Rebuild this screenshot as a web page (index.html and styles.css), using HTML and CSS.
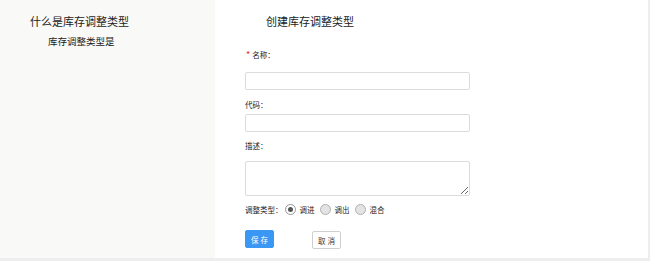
FILE: index.html
```html
<!DOCTYPE html>
<html lang="zh">
<head>
<meta charset="utf-8">
<title>创建库存调整类型</title>
<link rel="stylesheet" href="styles.css">
</head>
<body>
<div class="page">
  <aside class="sidebar">
    <div class="side-title">什么是库存调整类型</div>
    <div class="side-sub">库存调整类型是</div>
  </aside>
  <main class="main">
    <div class="main-title">创建库存调整类型</div>
    <div class="label label-name"><span class="req">*</span>名称：</div>
    <input class="input input-name" type="text">
    <div class="label label-code">代码：</div>
    <input class="input input-code" type="text">
    <div class="label label-desc">描述：</div>
    <textarea class="textarea"></textarea>
    <div class="radio-row">
      <span class="radio-label">调整类型：</span>
      <span class="radio checked"></span><span class="opt">调进</span>
      <span class="radio"></span><span class="opt">调出</span>
      <span class="radio"></span><span class="opt">混合</span>
    </div>
    <div class="buttons">
      <button class="btn btn-save">保存</button>
      <button class="btn btn-cancel">取消</button>
    </div>
  </main>
</div>
</body>
</html>
```
FILE: styles.css
```css
* { box-sizing: border-box; }
html, body { margin: 0; padding: 0; }
body {
  width: 650px;
  height: 261px;
  background: #eeeeee;
  font-family: "Noto Sans CJK SC", "Noto Sans", sans-serif;
  color: #333;
  overflow: hidden;
}
.page {
  display: flex;
  width: 648px;
  height: 258px;
}
.sidebar {
  width: 215px;
  background: #f9f9f7;
  padding-left: 30px;
}
.side-title {
  font-size: 11px;
  line-height: 14px;
  margin-top: 14px;
  color: #222;
}
.side-sub {
  font-size: 9.5px;
  line-height: 12px;
  margin-top: 7px;
  padding-left: 18px;
  color: #222;
}
.main {
  flex: 1;
  background: #fff;
  padding-left: 30px;
  display: flex;
  flex-direction: column;
  align-items: flex-start;
}
.main-title {
  font-size: 11px;
  line-height: 14px;
  margin-top: 14px;
  padding-left: 21px;
  color: #222;
}
.label {
  font-size: 7.5px;
  line-height: 10px;
  color: #222;
}
.req { color: #e22; margin-right: 2px; margin-left: 1px; font-size: 9px; }
.label-name { margin-top: 22px; }
.label-code { margin-top: 10px; }
.label-desc { margin-top: 9px; }
.input {
  width: 225px;
  height: 18px;
  border: 1px solid #dcdcdc;
  border-radius: 2px;
  padding: 0 4px;
  outline: none;
}
.input-name { margin-top: 12px; }
.input-code { margin-top: 4px; }
.textarea {
  margin-top: 10px;
  width: 225px;
  height: 35px;
  border: 1px solid #dcdcdc;
  border-radius: 2px;
  display: block;
}
.radio-row {
  display: flex;
  align-items: center;
  margin-top: 7px;
  height: 12px;
  font-size: 7.5px;
  color: #222;
}
.radio-label { margin-right: 2px; }
.radio {
  width: 11px;
  height: 11px;
  border-radius: 50%;
  border: 1px solid #b0b0b0;
  background: #e3e3e3;
  position: relative;
  margin-right: 4px;
}
.radio.checked { background: #fff; border-color: #999; }
.radio.checked::after {
  content: "";
  position: absolute;
  left: 2px; top: 2px;
  width: 5px; height: 5px;
  border-radius: 50%;
  background: #555;
}
.opt { margin-right: 5px; }
.buttons {
  display: flex;
  align-items: flex-start;
  margin-top: 15px;
}
.btn {
  font-family: inherit;
  font-size: 7.5px;
  letter-spacing: 2px;
  height: 18px;
  width: 29px;
  padding: 0 0 0 2px;
  border-radius: 2px;
  cursor: pointer;
}
.btn-save {
  background: #3a97f4;
  color: #fff;
  border: 1px solid #3a97f4;
}
.btn-cancel {
  margin-left: 38px;
  margin-top: 1px;
  background: #fff;
  color: #333;
  border: 1px solid #cfcfcf;
}
```
